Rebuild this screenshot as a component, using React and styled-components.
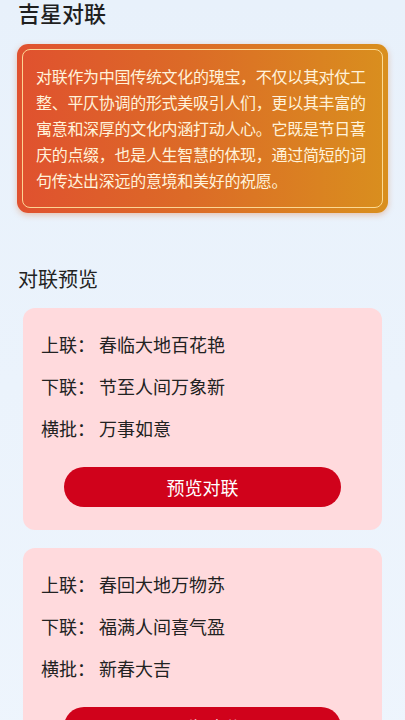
import React from 'react';
import styled, { createGlobalStyle } from 'styled-components';

const GlobalStyle = createGlobalStyle`
  html, body {
    margin: 0;
    padding: 0;
  }
  body {
    font-family: "Noto Sans CJK SC", "Noto Sans", sans-serif;
    background: linear-gradient(180deg, #e8f1fb 0%, #eef5fd 100%);
    min-height: 100vh;
    overflow: hidden;
  }
`;

const Page = styled.main`
  display: flex;
  flex-direction: column;
  padding: 0 17px 0 17px;
  min-height: 720px;
`;

const Title = styled.h1`
  margin: 0;
  padding-left: 1px;
  font-size: 22px;
  line-height: 25px;
  font-weight: 500;
  color: #1f1f1f;
`;

const Banner = styled.section`
  position: relative;
  margin-top: 19px;
  padding: 19px 19px 20px 19px;
  border-radius: 11px;
  background: linear-gradient(90deg, #e0512f 0%, #dc6a27 45%, #d98f1e 100%);
  box-shadow: 0 2px 6px rgba(214, 104, 40, 0.35);

  &::after {
    content: '';
    position: absolute;
    inset: 5px;
    border: 1.5px solid rgba(255, 226, 160, 0.9);
    border-radius: 8px;
    pointer-events: none;
  }
`;

const BannerText = styled.p`
  margin: 0;
  font-size: 16px;
  letter-spacing: -0.3px;
  line-height: 26px;
  color: #fff2da;
`;

const SectionTitle = styled.h2`
  margin: 52px 0 0 0;
  padding-left: 1px;
  font-size: 20px;
  line-height: 28px;
  font-weight: 400;
  color: #222;
`;

const List = styled.div`
  display: flex;
  flex-direction: column;
  gap: 18px;
  margin: 15px 6px 0 6px;
`;

const Card = styled.article`
  display: flex;
  flex-direction: column;
  padding: 15px 18px 23px 18px;
  border-radius: 12px;
  background: #ffdadd;
`;

const Line = styled.div`
  display: flex;
  align-items: center;
  height: 42px;
  font-size: 18px;
  color: #222;
`;

const Label = styled.span`
  width: 58px;
  flex-shrink: 0;
`;

const PreviewButton = styled.button`
  align-self: center;
  margin-top: 18px;
  width: 277px;
  height: 40px;
  border: none;
  border-radius: 20px;
  background: #d0021b;
  color: #fff;
  font-family: inherit;
  font-size: 18px;
  cursor: pointer;
`;

const couplets = [
  { up: '春临大地百花艳', down: '节至人间万象新', top: '万事如意' },
  { up: '春回大地万物苏', down: '福满人间喜气盈', top: '新春大吉' },
];

const CoupletCard = ({ item }) => (
  <Card>
    <Line><Label>上联：</Label>{item.up}</Line>
    <Line><Label>下联：</Label>{item.down}</Line>
    <Line><Label>横批：</Label>{item.top}</Line>
    <PreviewButton>预览对联</PreviewButton>
  </Card>
);

const App = () => {
  return (
    <>
      <GlobalStyle />
      <Page>
        <Title>吉星对联</Title>
        <Banner>
          <BannerText>
            对联作为中国传统文化的瑰宝，不仅以其对仗工整、平仄协调的形式美吸引人们，更以其丰富的寓意和深厚的文化内涵打动人心。它既是节日喜庆的点缀，也是人生智慧的体现，通过简短的词句传达出深远的意境和美好的祝愿。
          </BannerText>
        </Banner>
        <SectionTitle>对联预览</SectionTitle>
        <List>
          {couplets.map((c, i) => (
            <CoupletCard key={i} item={c} />
          ))}
        </List>
      </Page>
    </>
  );
};

export default App;
